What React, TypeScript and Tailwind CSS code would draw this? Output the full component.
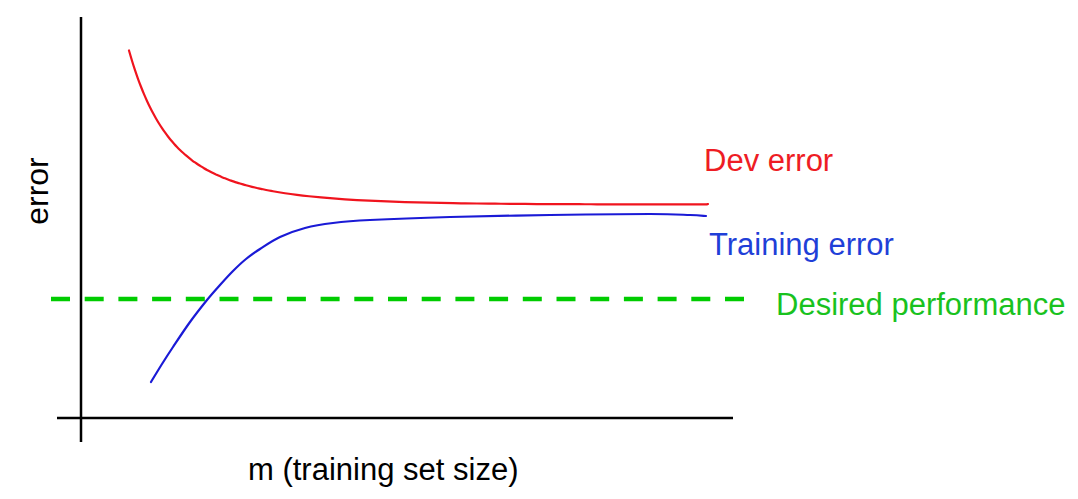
type Pt = [number, number];

// Catmull-Rom -> cubic bezier, good enough for hand drawn curves
const smooth = (pts: Pt[]) => {
  let d = `M${pts[0][0]},${pts[0][1]}`;
  for (let i = 0; i < pts.length - 1; i++) {
    const p0 = pts[i - 1] ?? pts[i];
    const p1 = pts[i];
    const p2 = pts[i + 1];
    const p3 = pts[i + 2] ?? p2;
    const c1x = p1[0] + (p2[0] - p0[0]) / 6;
    const c1y = p1[1] + (p2[1] - p0[1]) / 6;
    const c2x = p2[0] - (p3[0] - p1[0]) / 6;
    const c2y = p2[1] - (p3[1] - p1[1]) / 6;
    d += ` C${c1x.toFixed(2)},${c1y.toFixed(2)} ${c2x.toFixed(2)},${c2y.toFixed(2)} ${p2[0]},${p2[1]}`;
  }
  return d;
};

// dev error: double exponential decay towards ~204
const DEV: Pt[] = [];
for (let x = 129; x <= 708; x += x < 260 ? 3 : 12) {
  const dx = x - 129;
  const y = 204.5 - 77.7 * Math.exp(-dx / 30) - 76.3 * Math.exp(-dx / 80);
  DEV.push([x, Number(y.toFixed(2))]);
}
if (DEV[DEV.length - 1][0] !== 708) DEV.push([708, 204]);

const TRAIN: Pt[] = [
  [151, 382], [162, 364], [173, 347], [190, 322], [207, 300], [220, 285],
  [233, 271], [246, 259], [260, 249], [280, 237], [305, 228], [333, 223],
  [370, 220], [450, 217], [550, 215], [650, 214], [690, 215], [706, 216],
];

const FONT = '"Liberation Sans", Arial, Helvetica, sans-serif';

export default function App() {
  return (
    <div className="w-[1078px] h-[499px] bg-white overflow-hidden">
      <svg width="1078" height="499" viewBox="0 0 1078 499" className="block">
        {/* axes */}
        <line x1="81" y1="17" x2="81" y2="442" stroke="#000" strokeWidth="2.5" />
        <line x1="57" y1="418" x2="733" y2="418" stroke="#000" strokeWidth="2.5" />

        {/* desired performance */}
        <line
          x1="51"
          y1="299"
          x2="744"
          y2="299"
          stroke="#00cc00"
          strokeWidth="4.5"
          strokeDasharray="19 14.7"
        />

        <path d={smooth(DEV)} fill="none" stroke="#f0141e" strokeWidth="2.2" strokeLinecap="round" />
        <path d={smooth(TRAIN)} fill="none" stroke="#1a1ad6" strokeWidth="2.2" strokeLinecap="round" />

        <g style={{ fontFamily: FONT }} fontSize="31">
          <text x="704" y="171" fill="#ee1c24">Dev error</text>
          <text x="709" y="255" fill="#1f3fd8">Training error</text>
          <text x="776" y="315" fill="#19c21e">Desired performance</text>
          <text x="248" y="480" fill="#000">m (training set size)</text>
          <text
            x="48"
            y="191"
            fill="#000"
            fontSize="32"
            textAnchor="middle"
            transform="rotate(-90 48 191)"
          >
            error
          </text>
        </g>
      </svg>
    </div>
  );
}
